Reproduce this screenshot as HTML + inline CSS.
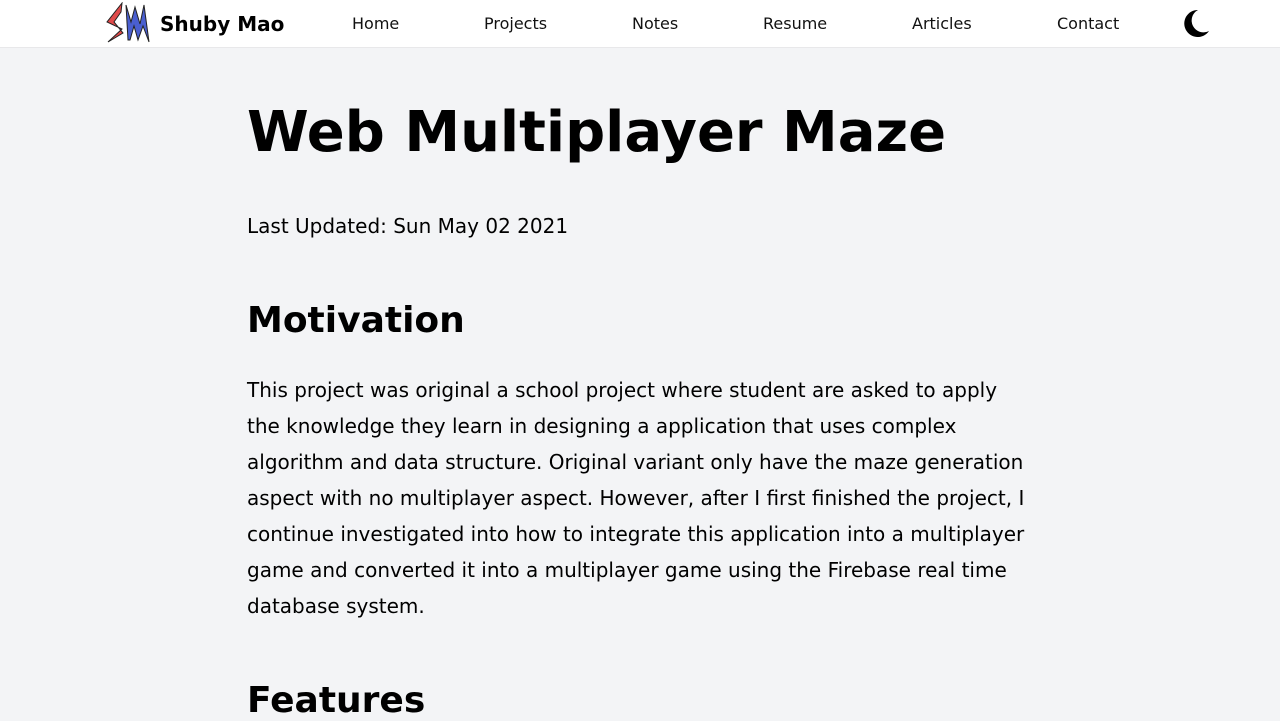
<!DOCTYPE html>
<html><head><meta charset="utf-8"><style>
body{margin:0;background:#f3f4f6;font-family:"DejaVu Sans","Liberation Sans",sans-serif;color:#000;width:1280px;height:720px;overflow:hidden}
.nav{position:absolute;top:0;left:0;width:1280px;height:47px;background:#fff;border-bottom:1px solid #e8e8ea}
.nav a{position:absolute;top:14px;font-size:16px;color:#111;text-decoration:none}
.brand{position:absolute;left:160px;top:12px;font-size:20px;font-weight:bold}
.c{position:absolute;left:247px;white-space:nowrap}
h1{font-size:56px;margin:0;font-weight:bold}
h2{font-size:36px;margin:0;font-weight:bold}
p{margin:0;font-size:20px;line-height:36px}
</style></head><body>
<div class="nav">
<svg style="position:absolute;left:104px;top:2px" width="48" height="42" viewBox="0 0 48 42">
<polygon points="18,1 3,20 18,27 4,40 19,31 10,20 17,10" fill="#e04a4a" stroke="#222" stroke-width="1"/>
<polygon points="22,3 27,20 31,5 36,22 40,3 45,40 39,24 34,38 30,24 26,38 24,38" fill="#4a5fd0" stroke="#222" stroke-width="1"/>
</svg>
<div class="brand">Shuby Mao</div>
<a style="left:352px">Home</a>
<a style="left:484px">Projects</a>
<a style="left:632px">Notes</a>
<a style="left:763px">Resume</a>
<a style="left:912px">Articles</a>
<a style="left:1057px">Contact</a>
<svg style="position:absolute;left:1181px;top:9px" width="30" height="30" viewBox="0 0 30 30">
<path d="M17 1 A13.5 13.5 0 1 0 28 22 A11 11 0 0 1 17 1 Z" fill="#000"/>
</svg>
</div>
<h1 class="c" style="top:100px">Web Multiplayer Maze</h1>
<p class="c" style="top:208px">Last Updated: Sun May 02 2021</p>
<h2 class="c" style="top:300px">Motivation</h2>
<p class="c" style="top:372px">This project was original a school project where student are asked to apply<br>the knowledge they learn in designing a application that uses complex<br>algorithm and data structure. Original variant only have the maze generation<br>aspect with no multiplayer aspect. However, after I first finished the project, I<br>continue investigated into how to integrate this application into a multiplayer<br>game and converted it into a multiplayer game using the Firebase real time<br>database system.</p>
<h2 class="c" style="top:680px">Features</h2>
</body></html>
